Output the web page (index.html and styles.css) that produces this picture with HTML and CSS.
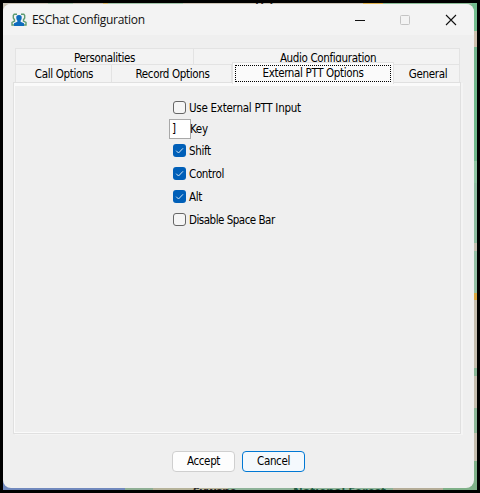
FILE: index.html
```html
<!DOCTYPE html>
<html lang="en">
<head>
    <meta charset="UTF-8">
    <meta name="viewport" content="width=device-width, initial-scale=1.0">
    <title>ESChat Configuration</title>
    <link rel="stylesheet" href="styles.css">
</head>
<body>
    <div class="map">
        <span class="place place-top">Urbana</span>
        <span class="place place-left">Suwano</span>
        <span class="place place-right">National Forest</span>
        <div class="window">
            <header class="titlebar">
                <svg class="app-icon" width="16" height="14" viewBox="0 0 16 14">
                    <g fill="none" stroke="#5d9b72" stroke-width="1.4">
                        <path d="M6 1.2H3.2L2.3 2.5V5L3.5 6.8V8L1 9.5V12H3"/>
                        <path d="M10 1.2H12.8L13.7 2.5V5L12.5 6.8V8L15 9.5V12H13"/>
                    </g>
                    <path fill="#0d6bbd" d="M8 2C10.2 2 10.9 3.3 10.7 5C10.6 6.3 10 7.2 9.6 7.7V8.7L13 10.2V13H3V10.2L6.4 8.7V7.7C6 7.2 5.4 6.3 5.3 5C5.1 3.3 5.8 2 8 2Z"/>
                </svg>
                <h1 class="title">ESChat Configuration</h1>
                <div class="controls">
                    <svg width="12" height="12" viewBox="0 0 12 12"><path d="M2 6.5H12" stroke="#111"/></svg>
                    <svg width="12" height="12" viewBox="0 0 12 12"><rect x="1.5" y="1.5" width="9" height="9" rx="1" fill="none" stroke="#c4c4c4"/></svg>
                    <svg width="12" height="12" viewBox="0 0 12 12"><path d="M1 1L11 11M11 1L1 11" stroke="#111" stroke-width="1.1"/></svg>
                </div>
            </header>

            <div class="tabs">
                <div class="tab-row tab-row-back">
                    <div class="tab personalities">Personalities</div>
                    <div class="tab audio">Audio Configuration</div>
                </div>
                <div class="tab-row tab-row-front">
                    <div class="tab call">Call Options</div>
                    <div class="tab record">Record Options</div>
                    <div class="tab external"><span class="focus">External PTT Options</span></div>
                    <div class="tab general">General</div>
                </div>
            </div>

            <main class="panel">
                <div class="options">
                    <label class="option wide"><span class="box"></span>Use External PTT Input</label>
                    <label class="key-row"><span class="key">]</span>Key</label>
                    <label class="option"><span class="box checked"><svg width="13" height="13" viewBox="0 0 13 13"><path d="M3.2 6.7L5.5 9L10 4.3"/></svg></span>Shift</label>
                    <label class="option"><span class="box checked"><svg width="13" height="13" viewBox="0 0 13 13"><path d="M3.2 6.7L5.5 9L10 4.3"/></svg></span>Control</label>
                    <label class="option"><span class="box checked"><svg width="13" height="13" viewBox="0 0 13 13"><path d="M3.2 6.7L5.5 9L10 4.3"/></svg></span>Alt</label>
                    <label class="option tight"><span class="box"></span>Disable Space Bar</label>
                </div>
            </main>

            <footer class="actions">
                <button class="btn">Accept</button>
                <button class="btn btn-default">Cancel</button>
            </footer>
        </div>
    </div>
</body>
</html>
```
FILE: styles.css
```css
* {
    box-sizing: border-box;
}
body {
    margin: 0;
    background: #000;
    font-family: "DejaVu Sans Condensed", "DejaVu Sans", sans-serif;
    font-stretch: condensed;
    font-size: 11.5px;
    letter-spacing: -0.35px;
    color: #000;
}
.map {
    position: relative;
    width: 480px;
    height: 493px;
    border: 3px solid #000;
    overflow: hidden;
    padding: 1px 3px 2px 0;
    background:
        linear-gradient(#73bd8e 0 28px, #cdbfae 28px 44px, #73b58d 44px 80px, #6fb88b 80px 158px, #8ec5a2 158px 180px, #8dbca0 180px 240px, #c5bfb0 240px 248px, #93bfa4 248px 290px, #d9a944 290px 297px, #c4bdae 297px 365px, #8ab797 365px 373px, #c4bdae 373px 405px, #8db798 405px 430px, #c4bdae 430px 458px, #7fb088 458px) right / 5px 100% no-repeat,
        linear-gradient(90deg, #7189bd 0 122px, #8faf95 122px 150px, #b6b39a 150px 225px, #8eb298 225px 390px, #b5ad98 390px 440px, #7fb088 440px) bottom / 100% 12px no-repeat,
        linear-gradient(90deg, #cbc4b6 0 45px, #a4bda6 45px 70px, #cbc4b6 70px 100px, #d9b869 100px 105px, #a3c4aa 105px 180px, #cbc4b6 180px 360px, #e0b24e 360px 380px, #8dbd98 380px) #cbc4b6;
}
.place {
    position: absolute;
    font: bold 12px/12px "Open Sans", sans-serif;
    letter-spacing: 0;
    color: #2b2b2b;
    white-space: nowrap;
}
.place-top {
    left: 252px;
    top: -2px;
}
.place-left {
    left: 190px;
    bottom: -8px;
    letter-spacing: -0.7px;
}
.place-right {
    left: 290px;
    bottom: -8px;
    color: #1f5a40;
}
.window {
    position: relative;
    width: 471px;
    height: 484px;
    background: #efefef;
    border-radius: 8px;
    overflow: hidden;
}
.titlebar {
    display: flex;
    align-items: center;
    height: 31px;
    padding: 0 17px 0 8px;
    background: #f3f3f3;
}
.title {
    margin: 0 0 0 5px;
    font: 12px/16px "Open Sans", sans-serif;
    letter-spacing: -0.3px;
    color: #111;
}
.controls {
    display: flex;
    gap: 34px;
    margin-left: auto;
}
.tabs {
    padding: 13px 14px 0 12px;
}
.tab-row {
    display: flex;
    border-left: 1px solid #e3e3e3;
}
.tab-row-back {
    height: 16px;
}
.tab-row-front {
    height: 18px;
}
.tab {
    border-top: 1px solid #e3e3e3;
    border-right: 1px solid #e3e3e3;
    background: #f3f3f3;
    text-align: center;
    line-height: 18px;
    white-space: nowrap;
}
.personalities {
    width: 178px;
}
.audio {
    flex: 1;
    padding-left: 3px;
}
.call {
    width: 96px;
    padding-left: 1px;
}
.record {
    width: 120px;
    padding-left: 2px;
}
.external {
    width: 162px;
    height: 22px;
    margin-top: -2px;
    padding: 2px;
    background: #fafafa;
    position: relative;
    border-left: 1px solid #e3e3e3;
}
.focus {
    display: block;
    height: 17px;
    border: 1px dotted #000;
    line-height: 14px;
}
.general {
    flex: 1;
    padding-left: 3px;
}
.panel {
    width: 448px;
    height: 352px;
    margin-left: 10px;
    border: 1px solid #e0e0e0;
    box-shadow: inset 1px 3px #fafafa, inset 0 -1px #fafafa, 2px 1px #f4f4f4;
    display: flex;
}
.options {
    padding: 14px 0 0 155px;
}
.option {
    display: flex;
    align-items: center;
    gap: 3px;
    height: 23px;
    padding-left: 4px;
}
.wide {
    height: 21px;
    letter-spacing: -0.26px;
}
.tight {
    letter-spacing: -0.5px;
}
.box {
    width: 13px;
    height: 13px;
    border: 1px solid #666;
    border-radius: 3px;
    background: #f5f5f5;
}
.checked {
    border: 0;
    background: #005fb8;
}
.checked svg {
    display: block;
    fill: none;
    stroke: #d5e6f5;
}
.key-row {
    display: flex;
    align-items: center;
    height: 20px;
    margin: 1px 0 0;
}
.key {
    width: 22px;
    height: 20px;
    margin-right: -1px;
    padding-left: 2px;
    border: 1px solid #a8a8a8;
    background: #fff;
    line-height: 19px;
}
.actions {
    display: flex;
    gap: 7px;
    padding: 17px 0 0 169px;
}
.btn {
    width: 63px;
    height: 21px;
    padding: 0 0 2px;
    border: 1px solid #cfcfcf;
    border-radius: 4px;
    background: #fdfdfd;
    font: inherit;
    letter-spacing: inherit;
    color: #000;
}
.btn-default {
    border-color: #0078d4;
    background: #f4f9fd;
}
```
